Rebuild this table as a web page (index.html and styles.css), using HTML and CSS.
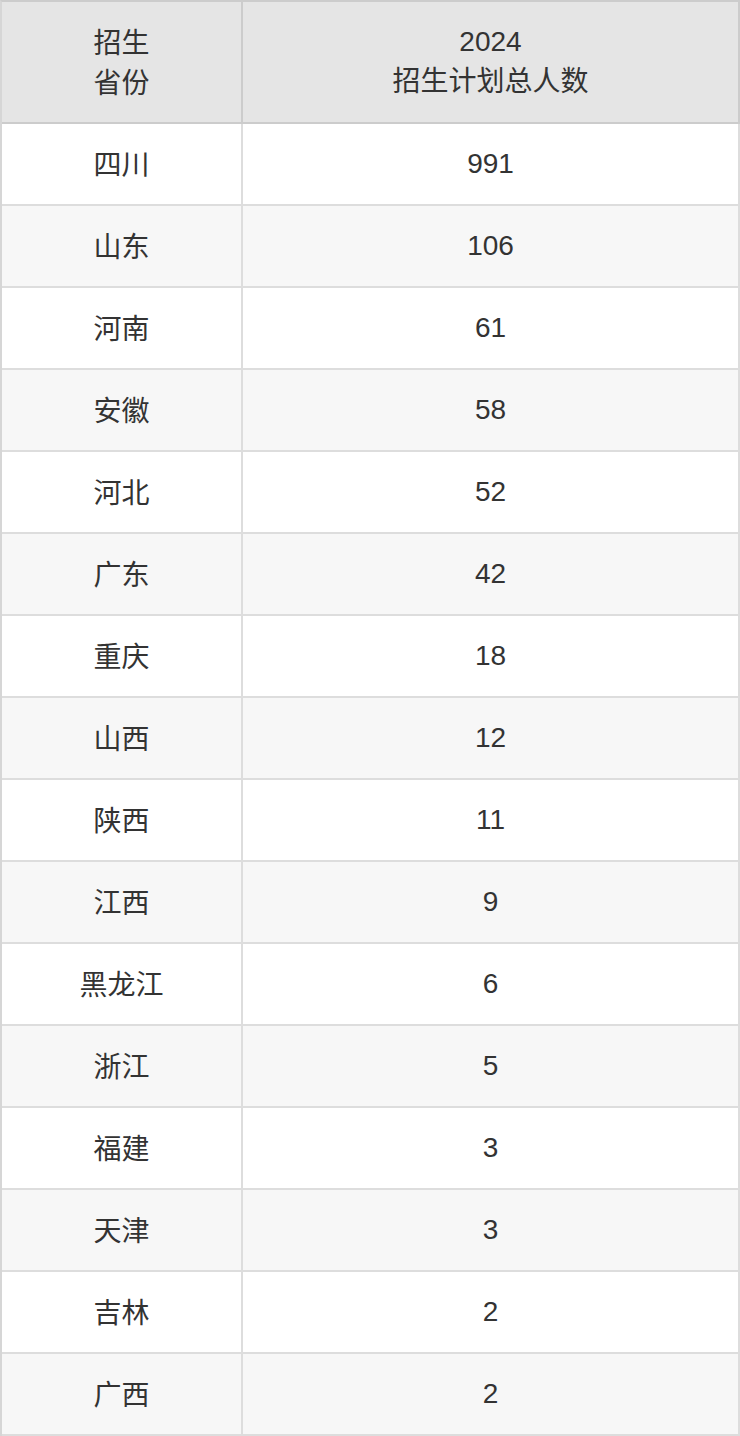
FILE: index.html
```html
<!DOCTYPE html>
<html lang="zh">
<head>
<meta charset="utf-8">
<link rel="stylesheet" href="styles.css">
</head>
<body>
<table class="plan">
  <thead>
    <tr><th class="c1"><span class="zh">招生<br>省份</span></th><th class="c2">2024<br>招生计划总人数</th></tr>
  </thead>
  <tbody>
    <tr><td><span class="zh">四川</span></td><td>991</td></tr>
    <tr><td><span class="zh">山东</span></td><td>106</td></tr>
    <tr><td><span class="zh">河南</span></td><td>61</td></tr>
    <tr><td><span class="zh">安徽</span></td><td>58</td></tr>
    <tr><td><span class="zh">河北</span></td><td>52</td></tr>
    <tr><td><span class="zh">广东</span></td><td>42</td></tr>
    <tr><td><span class="zh">重庆</span></td><td>18</td></tr>
    <tr><td><span class="zh">山西</span></td><td>12</td></tr>
    <tr><td><span class="zh">陕西</span></td><td>11</td></tr>
    <tr><td><span class="zh">江西</span></td><td>9</td></tr>
    <tr><td><span class="zh">黑龙江</span></td><td>6</td></tr>
    <tr><td><span class="zh">浙江</span></td><td>5</td></tr>
    <tr><td><span class="zh">福建</span></td><td>3</td></tr>
    <tr><td><span class="zh">天津</span></td><td>3</td></tr>
    <tr><td><span class="zh">吉林</span></td><td>2</td></tr>
    <tr><td><span class="zh">广西</span></td><td>2</td></tr>
  </tbody>
</table>
</body>
</html>
```
FILE: styles.css
```css
html, body { margin: 0; padding: 0; background: #fff; }
.plan {
  width: 740px;
  border-collapse: separate;
  border-spacing: 0;
  border-top: 2px solid #cccccc;
  border-left: 2px solid #d6d6d6;
  font-family: "Liberation Sans", "Noto Sans CJK SC", sans-serif;
  font-size: 28px;
  color: #333333;
  table-layout: fixed;
}
.plan th, .plan td {
  padding: 0;
  text-align: center;
  vertical-align: middle;
  font-weight: normal;
}
.plan th {
  background: #e5e5e5;
  height: 120px;
  line-height: 40px;
  border-right: 2px solid #cccccc;
  border-bottom: 2px solid #cccccc;
}
.plan th.c1 { width: 239px; }
.plan td {
  height: 80px;
  line-height: 40px;
  border-right: 2px solid #dddddd;
  border-bottom: 2px solid #dddddd;
}
.plan tbody tr:nth-child(even) td { background: #f7f7f7; }
.zh { display: inline-block; padding-top: 4px; }
```
